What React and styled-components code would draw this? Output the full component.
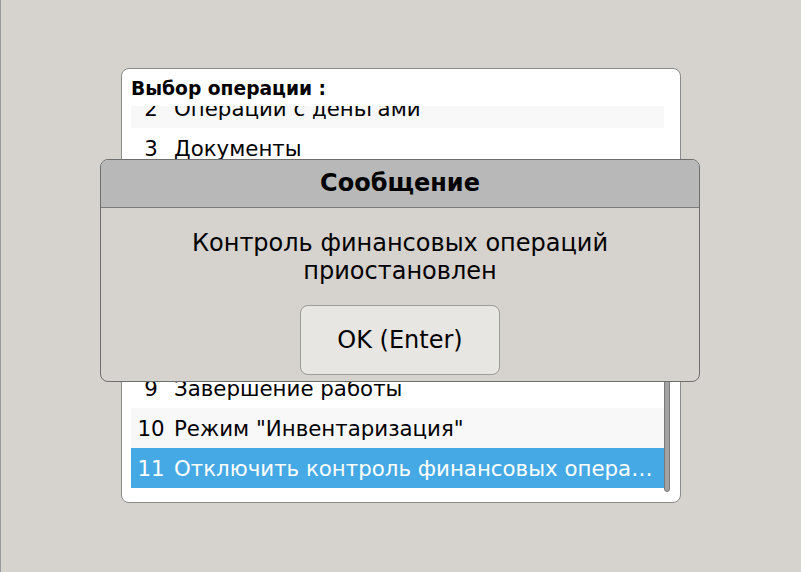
import React from "react";
import styled, { createGlobalStyle } from "styled-components";

const Global = createGlobalStyle`
  html, body { margin: 0; padding: 0; }
  body {
    background: #d6d2cd;
    font-family: "DejaVu Sans", "Liberation Sans", sans-serif;
    color: #000;
  }
`;

const Screen = styled.div`
  position: relative;
  width: 801px;
  height: 572px;
  box-sizing: border-box;
  border-left: 1px solid #9a9a9a;
  display: flex;
  align-items: center;
  justify-content: center;
  overflow: hidden;
`;

const Panel = styled.div`
  width: 560px;
  height: 435px;
  box-sizing: border-box;
  background: #fff;
  border: 1px solid #8c8c8c;
  border-radius: 8px;
  padding: 0 10px 0 9px;
  display: flex;
  flex-direction: column;
  margin-top: -1px;
`;

const PanelTitle = styled.div`
  height: 37px;
  flex: none;
  display: flex;
  align-items: center;
  padding-top: 1px;
  box-sizing: border-box;
  font-weight: bold;
  font-size: 18.67px;
`;

const ListArea = styled.div`
  display: flex;
  height: 386px;
  overflow: hidden;
`;

const Rows = styled.div`
  width: 533px;
  flex: none;
  overflow: hidden;
`;

const RowsInner = styled.div`
  margin-top: ${(p) => -p.$offset}px;
`;

const Row = styled.div`
  height: 40px;
  display: flex;
  align-items: center;
  font-size: 21.33px;
  background: ${(p) => (p.$selected ? "#45a9e5" : p.$even ? "#f8f8f8" : "#fff")};
  color: ${(p) => (p.$selected ? "#fff" : "#000")};
  white-space: nowrap;
`;

const Num = styled.span`
  width: 40px;
  flex: none;
  text-align: center;
`;

const Name = styled.span`
  margin-left: 3px;
  overflow: hidden;
  text-overflow: ellipsis;
  padding-right: 6px;
`;

const Track = styled.div`
  width: 6px;
  flex: none;
`;

const Thumb = styled.div`
  margin-top: ${(p) => p.$top}px;
  height: ${(p) => p.$height}px;
  width: 6px;
  box-sizing: border-box;
  background: #a3a3a3;
  border: 1px solid #7a7a7a;
  border-radius: 3px;
`;

const Dialog = styled.div`
  position: absolute;
  left: 99px;
  top: 159px;
  width: 600px;
  height: 223px;
  box-sizing: border-box;
  background: #d6d2cd;
  border: 1px solid #6e6e6e;
  border-radius: 8px;
  overflow: hidden;
  display: flex;
  flex-direction: column;
`;

const DialogTitle = styled.div`
  height: 48px;
  flex: none;
  box-sizing: border-box;
  background: #b8b8b8;
  border-bottom: 1px solid #7c7c7c;
  display: flex;
  align-items: center;
  justify-content: center;
  padding-bottom: 2px;
  font-weight: bold;
  font-size: 24px;
`;

const DialogBody = styled.div`
  flex: 1;
  display: flex;
  flex-direction: column;
  align-items: center;
  padding-top: 21px;
`;

const Message = styled.div`
  font-size: 24px;
  line-height: 28px;
  text-align: center;
`;

const Button = styled.button`
  margin-top: 20px;
  width: 200px;
  height: 70px;
  box-sizing: border-box;
  background: #e8e6e3;
  border: 1px solid #9c9c9c;
  border-radius: 8px;
  font-family: "DejaVu Sans", "Liberation Sans", sans-serif;
  font-size: 24px;
  color: #000;
  padding: 0;
`;

const items = [
  "Регистрация продаж",
  "Операции с деньгами",
  "Документы",
  "Отчеты",
  "Сервис",
  "Настройки",
  "Смена кассира",
  "Блокировка",
  "Завершение работы",
  "Режим \"Инвентаризация\"",
  "Отключить контроль финансовых операций",
];

export default function App() {
  return (
    <>
      <Global />
      <Screen>
        <Panel>
          <PanelTitle>Выбор операции :</PanelTitle>
          <ListArea>
            <Rows>
              <RowsInner $offset={58}>
                {items.map((t, i) => (
                  <Row key={i} $even={(i + 1) % 2 === 0} $selected={i === 10}>
                    <Num>{i + 1}</Num>
                    <Name>{t}</Name>
                  </Row>
                ))}
              </RowsInner>
            </Rows>
            <Track>
              <Thumb $top={56} $height={330} />
            </Track>
          </ListArea>
        </Panel>
        <Dialog>
          <DialogTitle>Сообщение</DialogTitle>
          <DialogBody>
            <Message>
              Контроль финансовых операций
              <br />
              приостановлен
            </Message>
            <Button>OK (Enter)</Button>
          </DialogBody>
        </Dialog>
      </Screen>
    </>
  );
}
